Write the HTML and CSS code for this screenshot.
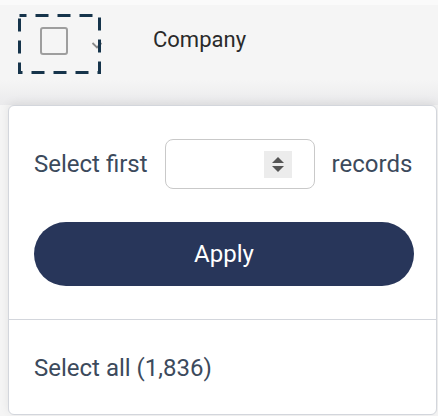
FILE: index.html
```html
<!DOCTYPE html>
<html>
<head>
<meta charset="utf-8">
<link rel="stylesheet" href="styles.css">
</head>
<body>
<div class="page">
  <div class="header">
    <div class="select-cell">
      <span class="checkbox"></span>
      <svg class="chev" width="12" height="9" viewBox="0 0 12 9">
        <polyline points="1.5,2 6,6.5 10.5,2" fill="none" stroke="#8a8a8a" stroke-width="1.8"/>
      </svg>
      <svg class="focus" width="84" height="62" viewBox="0 0 84 62">
        <rect x="1.5" y="1.5" width="80" height="57" fill="none" stroke="#16344b" stroke-width="3" stroke-dasharray="13 9" stroke-dashoffset="6"/>
      </svg>
    </div>
    <div class="col-title">Company</div>
  </div>
  <div class="popup">
    <div class="popup-top">
      <div class="select-row">
        <span class="label">Select first</span>
        <div class="num-input">
          <span class="spinner">
            <svg width="28" height="27" viewBox="0 0 28 27">
              <polygon points="8,12 14,6 20,12" fill="#555"/>
              <polygon points="8,15 14,21 20,15" fill="#555"/>
            </svg>
          </span>
        </div>
        <span class="label">records</span>
      </div>
      <button class="apply">Apply</button>
    </div>
    <div class="popup-bottom">
      <span class="label">Select all (1,836)</span>
    </div>
  </div>
</div>
</body>
</html>
```
FILE: styles.css
```css
* { box-sizing: border-box; }
html, body { margin: 0; padding: 0; }
body {
  background: #f5f5f5;
  font-family: Roboto, "Liberation Sans", sans-serif;
  width: 438px;
  height: 416px;
  overflow: hidden;
}
.page {
  border-top: 5px solid #fafafa;
}
.header {
  height: 100px;
  display: flex;
  align-items: flex-start;
  background: linear-gradient(#f5f5f5 75%, #eaeaec 100%);
}
.select-cell {
  position: relative;
  width: 84px;
  height: 62px;
  margin: 9px 0 0 18px;
}
.focus { position: absolute; left: 0; top: 0; }
.checkbox {
  position: absolute;
  left: 22px;
  top: 13px;
  width: 28px;
  height: 28px;
  border: 2.5px solid #9e9e9e;
  border-radius: 3px;
}
.chev { position: absolute; left: 73px; top: 27px; }
.col-title {
  margin: 22px 0 0 51px;
  font-size: 22px;
  line-height: 26px;
  color: #2a2a2a;
}
.popup {
  margin: 0 1px 0 8px;
  height: 310px;
  background: #fff;
  border: 1px solid #d3d6dc;
  border-radius: 6px;
  box-shadow: 0 -2px 10px rgba(0,0,0,0.08);
}
.popup-top {
  padding: 33px 10px 33px 25px;
  border-bottom: 1.5px solid #d3d6dc;
}
.select-row {
  display: flex;
  align-items: center;
  height: 50px;
}
.label {
  font-size: 24px;
  line-height: 28px;
  color: #3c4a5c;
  white-space: nowrap;
  flex: none;
}
.num-input {
  flex: none;
  width: 150px;
  height: 50px;
  margin: 0 17px 0 17px;
  border: 1.5px solid #c9c9c9;
  border-radius: 8px;
  display: flex;
  align-items: center;
  justify-content: flex-end;
  padding-right: 22px;
}
.spinner {
  display: block;
  width: 28px;
  height: 27px;
  background: #ececec;
}
.spinner svg { display: block; }
.apply {
  display: block;
  width: 380px;
  height: 64px;
  margin-top: 33px;
  border: none;
  border-radius: 32px;
  background: #28365a;
  color: #fff;
  font-family: Roboto, "Liberation Sans", sans-serif;
  font-size: 24px;
}
.popup-bottom {
  padding: 34px 25px;
}
```
